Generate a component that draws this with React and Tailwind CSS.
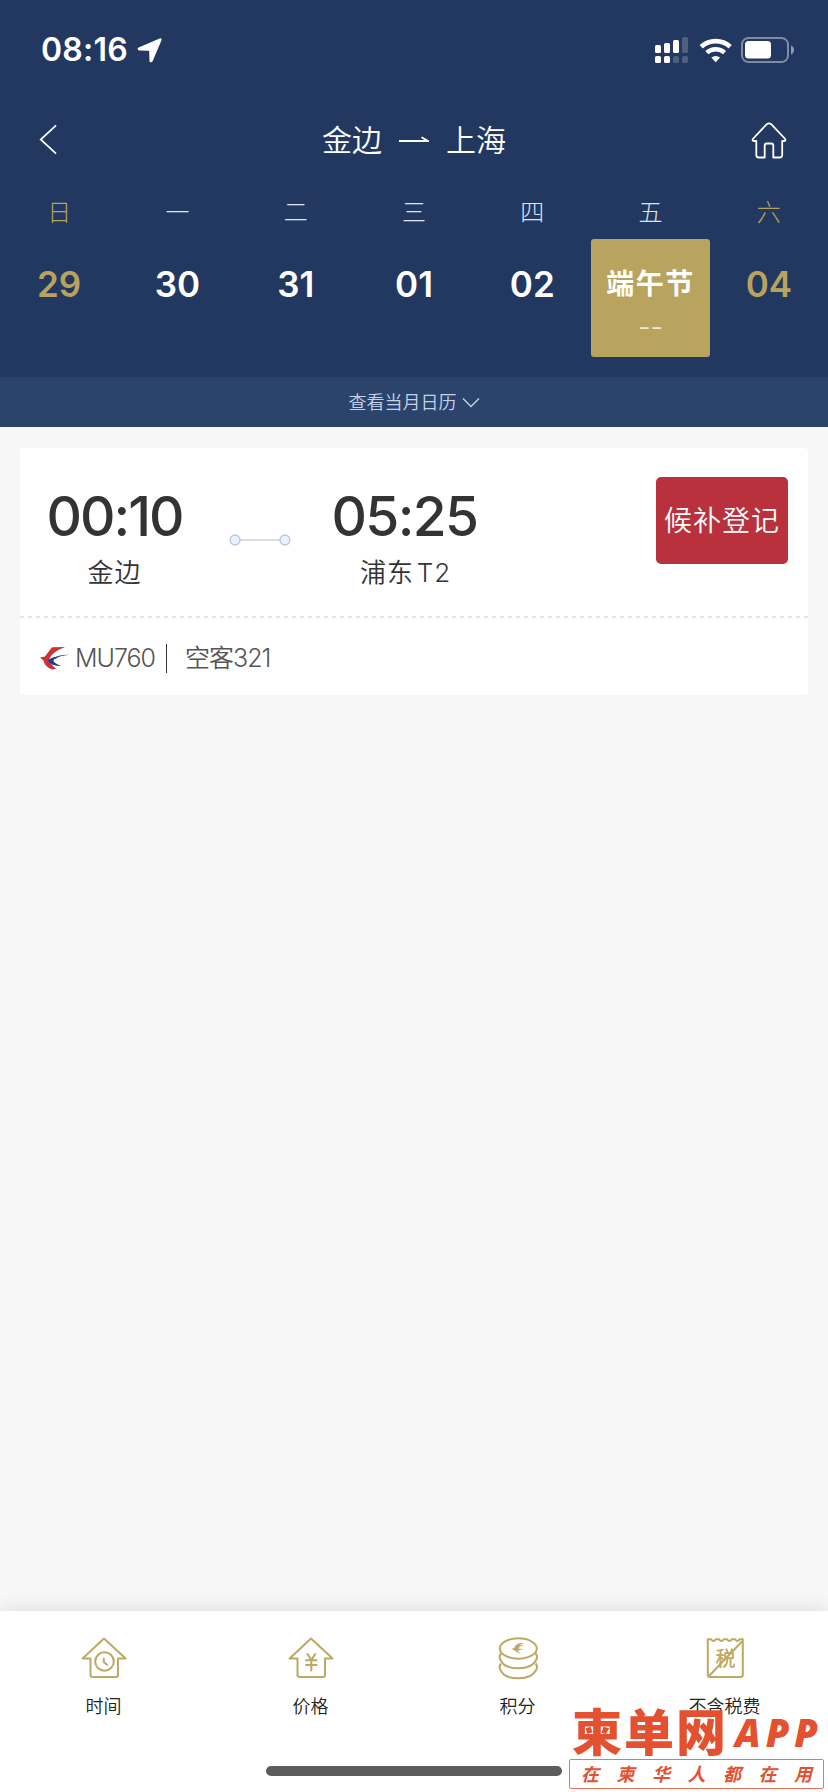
import React, { useState } from 'react';

const days = [
  { week: '日', date: '29', weekend: true },
  { week: '一', date: '30' },
  { week: '二', date: '31' },
  { week: '三', date: '01' },
  { week: '四', date: '02' },
  { week: '五', date: '端午节', holiday: true },
  { week: '六', date: '04', weekend: true },
];

const StatusBar = () => (
  <div className="flex h-[100px] items-center justify-between pl-[41px] pr-[33px] text-white">
    <div className="flex items-center">
      <span className="w-[96px] text-[32px] leading-none font-semibold tracking-[0.2px]">08:16</span>
      <svg width="25" height="25" viewBox="0 0 25 25" fill="currentColor">
        <path d="M22.6 0.5C24 0 25 1 24.4 2.4L15.6 23.3C14.9 24.9 12.6 24.6 12.5 22.8L12.2 13.8C12.2 13 12 12.7 11.2 12.7L2.2 12.5C0.4 12.4 0 10.2 1.6 9.5Z" />
      </svg>
    </div>
    <div className="flex items-center">
      <svg width="34" height="26" viewBox="0 0 34 26" fill="currentColor">
        <rect x="0" y="8" width="6" height="8" rx="1.5" />
        <rect x="9" y="6" width="6" height="10" rx="1.5" />
        <rect x="18" y="3" width="6" height="13" rx="1.5" />
        <rect x="27" y="0" width="6" height="16" rx="1.5" opacity="0.2" />
        <rect x="0" y="19" width="6" height="7" rx="1.5" />
        <rect x="9" y="19" width="6" height="7" rx="1.5" />
        <rect x="18" y="19" width="6" height="7" rx="1.5" opacity="0.2" />
        <rect x="27" y="19" width="6" height="7" rx="1.5" opacity="0.2" />
      </svg>
      <svg className="ml-[10px]" width="34" height="25" viewBox="0 0 34 25" fill="none" stroke="currentColor">
        <path d="M2.2 8.8A21.4 21.4 0 0 1 31.2 8.8" strokeWidth="4.6" />
        <path d="M7.8 14.6A13.3 13.3 0 0 1 25.6 14.6" strokeWidth="4.4" />
        <path d="M12.3 19.6A7.2 7.2 0 0 1 21.1 19.6L16.7 24.2Z" fill="currentColor" stroke="none" />
      </svg>
      <svg className="ml-2" width="54" height="26" viewBox="0 0 54 26" fill="none">
        <rect x="1" y="1" width="46" height="24" rx="6.5" stroke="white" strokeOpacity="0.42" strokeWidth="2" />
        <rect x="4" y="4" width="26" height="17.5" rx="3.5" fill="white" />
        <path d="M50 8.5C54 9.5 54 16.5 50 17.5Z" fill="white" fillOpacity="0.5" />
      </svg>
    </div>
  </div>
);

const TitleBar = () => (
  <div className="flex h-[80px] items-center justify-between pl-[39px] pr-[41px] text-white">
    <button className="w-[38px] pb-[2px]">
      <svg width="18" height="31" viewBox="0 0 19 32" fill="none" stroke="currentColor" strokeWidth="1.8">
        <path d="M18 1L1.8 16L18 31" />
      </svg>
    </button>
    <h1 className="flex items-center text-[30px] leading-none font-[350]">
      金边
      <svg className="mx-[17px]" width="30" height="8" viewBox="0 0 30 8" fill="none" stroke="currentColor" strokeWidth="1.8">
        <path d="M0 5H29L22.5 1.2" />
      </svg>
      上海
    </h1>
    <button>
      <svg width="36" height="37" viewBox="0 0 36 37" fill="none" stroke="currentColor" strokeWidth="1.8" strokeLinejoin="round">
        <path d="M15.8 2.2Q18 0.5 20.2 2.2L34.2 17Q35 19 32.8 19H31.2V33Q31.2 35.5 28.7 35.5H22.3V23.5Q22.3 21.5 20.3 21.5H15.7Q13.7 21.5 13.7 23.5V35.5H7.8Q5.3 35.5 5.3 33V19H3.2Q1 19 1.8 17Z" />
      </svg>
    </button>
  </div>
);

const Calendar = () => {
  const [selected, setSelected] = useState(5);

  return (
    <div className="grid h-[197px] grid-cols-7">
      {days.map((day, i) => (
        <div key={day.date} className={`text-center ${day.weekend ? 'text-[#b8a25e]' : 'text-white'}`}>
          <div className={`pt-[18px] text-[24px] leading-[30px] font-light ${day.weekend ? '' : 'text-[#dbe5f7]'}`}>
            {day.week}
          </div>
          <button
            onClick={() => setSelected(i)}
            className={`mt-[11px] flex h-[118px] w-full flex-col items-center rounded-[3px] pt-[25px] ${
              selected === i ? 'bg-[#b8a35f]' : ''
            }`}
          >
            <span
              className={`flex h-10 items-center justify-center leading-none ${
                day.holiday ? 'text-[28px] font-bold tracking-[1.5px]' : 'text-[35px] font-semibold'
              }`}
            >
              {day.date}
            </span>
            {day.holiday && (
              <span className="mt-[11px] text-[28px] leading-[24px] font-light text-[#f0ead5]">--</span>
            )}
          </button>
        </div>
      ))}
    </div>
  );
};

const FlightCard = () => (
  <div className="mx-5 mt-[21px] h-[247px] rounded-[4px] bg-white text-[#333]">
    <div className="flex h-[168px]">
      <div className="ml-[19px] w-[151px] pt-[39px] text-center">
        <div className="text-[55px] leading-[58px] font-medium tracking-[-2px]">00:10</div>
        <div className="mt-[12px] text-[26px] leading-[32px] font-[350] tracking-[1px]">金边</div>
      </div>
      <svg className="mt-[86px] ml-[39px]" width="62" height="12" viewBox="0 0 62 12" fill="#e8f1fc" stroke="#b9c6dc">
        <path d="M11 6H51" stroke="#cdd2de" strokeWidth="1.6" />
        <circle cx="6" cy="6" r="5" strokeWidth="1.3" />
        <circle cx="56" cy="6" r="5" strokeWidth="1.3" />
      </svg>
      <div className="ml-[36px] w-[155px] pt-[39px] text-center">
        <div className="text-[55px] leading-[58px] font-medium tracking-[-1.6px]">05:25</div>
        <div className="mt-[12px] pl-[2px] text-[26px] leading-[32px] font-[350] tracking-[0.8px] [word-spacing:-5px]">浦东 T2</div>
      </div>
      <button className="mt-[29px] mr-5 ml-auto h-[87px] w-[132px] rounded-[5px] bg-[#b9313c] text-[28px] font-[350] tracking-[1px] whitespace-nowrap text-white">
        候补登记
      </button>
    </div>
    <svg className="block" width="788" height="2" viewBox="0 0 788 2">
      <path d="M0 1H788" stroke="#dcdcdc" strokeWidth="1.6" strokeDasharray="4 4" />
    </svg>
    <div className="flex h-[77px] items-center pt-[3px] pl-5 text-[25px] leading-none font-light text-[#555]">
      <svg width="30" height="24" viewBox="0 0 30 24">
        <path d="M25 1L12 1.2Q9 5 5 10.5L0 11.5L3.5 14.5Q5 21 12 23.5L16 22.8Q9 17 9.5 12.5Q12 6 25 1Z" fill="#cf3137" />
        <path d="M29 8.8Q19 8.5 11.5 12.7Q14.5 12.5 15.5 13Q19 9.8 29 8.8Z" fill="#1d3c94" />
        <path d="M8 14.5Q11 11 17 11Q13.5 13 13.3 15Q15.5 18.2 21.5 20Q11 20 8 14.5Z" fill="#1d3c94" />
      </svg>
      <span className="ml-[5px] w-[91px] tracking-[-1px]">MU760</span>
      <span className="h-[29px] w-px bg-[#333]" />
      <span className="ml-[18px] font-[350] tracking-[-1px]">空客321</span>
    </div>
  </div>
);

const HouseIcon = ({ children }) => (
  <svg width="48" height="44" viewBox="0 0 48 44" fill="none" stroke="#bda961" strokeWidth="2" strokeLinejoin="round" strokeLinecap="round">
    <path d="M24 2.5L2.6 22.5H10.5V39Q10.5 41 12.5 41H36Q38 41 38 39V22.5H45.6Z" />
    {children}
  </svg>
);

const TimeIcon = () => (
  <HouseIcon>
    <circle cx="24.5" cy="25.5" r="9.3" />
    <path d="M23.8 22.5V26L27 28.8" />
  </HouseIcon>
);

const PriceIcon = () => (
  <HouseIcon>
    <path d="M20.5 18L24.3 24.3L28.1 18M24.3 24.3V34.5M19 24.3H29.6M19 29H29.6" />
  </HouseIcon>
);

const PointsIcon = () => (
  <svg width="48" height="44" viewBox="0 0 48 44" fill="none" stroke="#bda961" strokeWidth="2">
    <ellipse cx="24.3" cy="12.5" rx="18.5" ry="10.2" />
    <path d="M7 17.5Q4.5 20.5 6.5 24C9 29.5 16 32.3 24.3 32.3S39.6 29.5 42.1 24Q44.1 20.5 41.6 17.5" />
    <path d="M7 27.5Q4.5 30.5 6.5 34C9 39.5 16 42.3 24.3 42.3S39.6 39.5 42.1 34Q44.1 30.5 41.6 27.5" />
    <path d="M29.5 7.2Q24.5 6.6 21.5 9.5L20 12L17.5 12.5L20.5 14.5L26 18L23.7 14.5Q25.5 13.8 29 13.5Q26 12.3 23.8 12.5Q26 10 30.5 9L25 9.5Z" fill="#bda961" stroke="none" />
  </svg>
);

const TaxIcon = () => (
  <svg width="48" height="44" viewBox="0 0 48 44" fill="none" stroke="#bda961" strokeWidth="2" strokeLinejoin="round">
    <path d="M6.8 3.2V39Q6.8 41 8.8 41H39.8Q41.8 41 41.8 39V3.2H38.5Q36.5 7 34.2 3.2H30.7Q28.5 7 26.2 3.2H22.7Q20.5 7 18.2 3.2H14.7Q12.5 7 10.2 3.2Z" />
    <path d="M7.5 40.5L41 5.5" />
    <text x="24.5" y="30" fontSize="20" fontWeight="500" textAnchor="middle" fill="#bda961" stroke="none">税</text>
  </svg>
);

const tabs = [
  { label: '时间', icon: TimeIcon },
  { label: '价格', icon: PriceIcon },
  { label: '积分', icon: PointsIcon },
  { label: '不含税费', icon: TaxIcon },
];

const Watermark = () => (
  <div className="absolute right-[4px] bottom-[3px] w-[255px] text-[#e35130]">
    <div className="flex h-[52px] items-center pl-[3px]">
      <span className="text-[50px] leading-none font-black tracking-[2px]">柬单网</span>
      <span className="ml-[7px] pb-[3px] text-[38px] leading-none font-extrabold tracking-[5px] italic font-['Open_Sans']">APP</span>
    </div>
    <div className="flex h-[30px] items-center justify-between rounded-[2px] border border-[#e6765c] bg-white px-[11px] pt-px text-[18px] leading-none font-semibold italic">
      {'在柬华人都在用'.split('').map((char, i) => (
        <span key={i}>{char}</span>
      ))}
    </div>
  </div>
);

const App = () => {
  return (
    <div className="relative flex h-[1792px] w-[828px] flex-col overflow-hidden bg-[#f7f7f7] font-['Inter','Noto_Sans_CJK_SC',sans-serif]">
      <header className="bg-[#223860]">
        <StatusBar />
        <TitleBar />
        <Calendar />
        <button className="flex h-[50px] w-full items-center justify-center bg-[#2b446b] text-[18px] font-[350] text-[#c5d3ea]">
          查看当月日历
          <svg className="ml-[5px]" width="18" height="11" viewBox="0 0 18 11" fill="none" stroke="currentColor" strokeWidth="1.4">
            <path d="M1 1.5L9 9.5L17 1.5" />
          </svg>
        </button>
      </header>

      <main className="flex-1">
        <FlightCard />
      </main>

      <nav className="h-[181px] bg-white shadow-[0_0_20px_rgba(0,0,0,0.12)]">
        <div className="grid h-[155px] grid-cols-4 pt-[25px]">
          {tabs.map(({ label, icon: Icon }) => (
            <button key={label} className="flex flex-col items-center text-[18px] leading-[24px] font-[350] text-[#222]">
              <Icon />
              <span className="mt-[15px]">{label}</span>
            </button>
          ))}
        </div>
        <div className="mx-auto h-[10px] w-[296px] rounded-full bg-[#5c5c5c]" />
      </nav>

      <Watermark />
    </div>
  );
};

export default App;
